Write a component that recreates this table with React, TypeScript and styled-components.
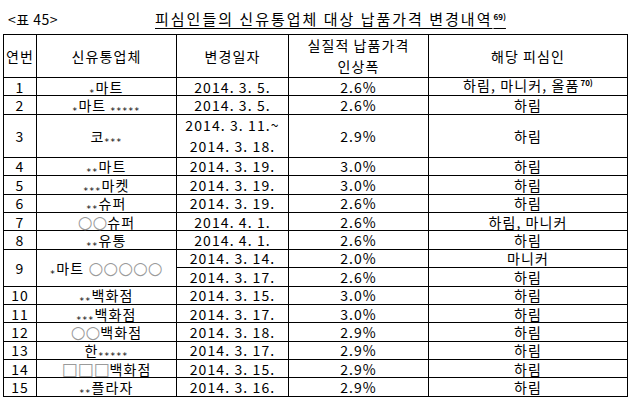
import styled, { createGlobalStyle } from 'styled-components';

const GlobalStyle = createGlobalStyle`
    html, body {
        margin: 0;
        padding: 0;
        background: #ffffff;
    }
    body {
        font-family: "Noto Sans CJK KR", "DejaVu Sans", sans-serif;
        color: #000000;
    }
`;

const Page = styled.div`
    width: 629px;
    height: 400px;
    padding: 3px 2px 0 3px;
    box-sizing: border-box;
    overflow: hidden;
`;

const TitleRow = styled.div`
    display: flex;
    align-items: flex-end;
    height: 26px;
    margin-bottom: 5px;
`;

const TableNo = styled.span`
    width: 147px;
    padding-left: 5px;
    font-size: 14px;
    letter-spacing: 0.5px;
`;

const Caption = styled.span`
    font-size: 15px;
    letter-spacing: 2px;
    text-decoration: underline;
    text-underline-offset: 3px;
`;

const Note = styled.span`
    position: relative;
    top: -5px;
    font-size: 8px;
    font-weight: bold;
    letter-spacing: 0;
    margin-left: 1px;
`;

const Table = styled.table`
    border-collapse: collapse;
    width: 624px;
    table-layout: fixed;
    font-size: 14px;
    letter-spacing: 1.1px;
`;

const Col = styled.col<{ $w: number }>`
    width: ${(p) => p.$w}px;
`;

const HeadCell = styled.th`
    border: 1px solid #000;
    font-weight: normal;
    height: 41px;
    padding: 0;
    line-height: 21px;
    text-align: center;
`;

const Row = styled.tr<{ $h?: number }>`
    height: ${(p) => p.$h ?? 18.4}px;
`;

const Cell = styled.td`
    border: 1px solid #000;
    padding: 0;
    line-height: 14px;
    text-align: center;
    white-space: nowrap;
`;

const TwoLine = styled.div`
    line-height: 21px;
`;

const Gray = styled.span<{ $size?: number }>`
    color: #9a9a9a;
    font-family: "DejaVu Sans", sans-serif;
    font-size: ${(p) => p.$size ?? 17}px;
    line-height: 0;
    letter-spacing: 0;
`;

const Star = styled.span`
    font-family: "DejaVu Sans", sans-serif;
    font-size: 9px;
    line-height: 0;
    letter-spacing: 1.5px;
    vertical-align: -3px;
`;

type Item = {
    no: number;
    name: React.ReactNode;
    date: string;
    rate: string;
    who: React.ReactNode;
};

const stars = (n: number) => <Star>{'*'.repeat(n)}</Star>;

const items: Item[] = [
    { no: 1, name: <>{stars(1)}마트</>, date: '2014. 3. 5.', rate: '2.6%', who: <>하림, 마니커, 올품<Note>70)</Note></> },
    { no: 2, name: <>{stars(1)}마트 {stars(5)}</>, date: '2014. 3. 5.', rate: '2.6%', who: '하림' },
];

const items2: Item[] = [
    { no: 4, name: <>{stars(2)}마트</>, date: '2014. 3. 19.', rate: '3.0%', who: '하림' },
    { no: 5, name: <>{stars(3)}마켓</>, date: '2014. 3. 19.', rate: '3.0%', who: '하림' },
    { no: 6, name: <>{stars(2)}슈퍼</>, date: '2014. 3. 19.', rate: '2.6%', who: '하림' },
    { no: 7, name: <><Gray>○○</Gray>슈퍼</>, date: '2014. 4. 1.', rate: '2.6%', who: '하림, 마니커' },
    { no: 8, name: <>{stars(2)}유통</>, date: '2014. 4. 1.', rate: '2.6%', who: '하림' },
];

const items3: Item[] = [
    { no: 10, name: <>{stars(2)}백화점</>, date: '2014. 3. 15.', rate: '3.0%', who: '하림' },
    { no: 11, name: <>{stars(3)}백화점</>, date: '2014. 3. 17.', rate: '3.0%', who: '하림' },
    { no: 12, name: <><Gray>○○</Gray>백화점</>, date: '2014. 3. 18.', rate: '2.9%', who: '하림' },
    { no: 13, name: <>한{stars(5)}</>, date: '2014. 3. 17.', rate: '2.9%', who: '하림' },
    { no: 14, name: <><Gray>□□□</Gray>백화점</>, date: '2014. 3. 15.', rate: '2.9%', who: '하림' },
    { no: 15, name: <>{stars(2)}플라자</>, date: '2014. 3. 16.', rate: '2.9%', who: '하림' },
];

const renderRow = (it: Item) => (
    <Row key={it.no}>
        <Cell>{it.no}</Cell>
        <Cell>{it.name}</Cell>
        <Cell>{it.date}</Cell>
        <Cell>{it.rate}</Cell>
        <Cell>{it.who}</Cell>
    </Row>
);

const App = () => {
    return (
        <Page>
            <GlobalStyle />
            <TitleRow>
                <TableNo>&lt;표 45&gt;</TableNo>
                <Caption>
                    피심인들의 신유통업체 대상 납품가격 변경내역<Note>69)</Note>
                </Caption>
            </TitleRow>
            <Table>
                <colgroup>
                    <Col $w={33} />
                    <Col $w={140} />
                    <Col $w={112} />
                    <Col $w={140} />
                    <Col $w={199} />
                </colgroup>
                <thead>
                    <tr>
                        <HeadCell>연번</HeadCell>
                        <HeadCell>신유통업체</HeadCell>
                        <HeadCell>변경일자</HeadCell>
                        <HeadCell>
                            실질적 납품가격
                            <br />
                            인상폭
                        </HeadCell>
                        <HeadCell>해당 피심인</HeadCell>
                    </tr>
                </thead>
                <tbody>
                    {items.map(renderRow)}
                    <Row $h={43}>
                        <Cell>3</Cell>
                        <Cell>코{stars(3)}</Cell>
                        <Cell>
                            <TwoLine>
                                2014. 3. 11.~
                                <br />
                                2014. 3. 18.
                            </TwoLine>
                        </Cell>
                        <Cell>2.9%</Cell>
                        <Cell>하림</Cell>
                    </Row>
                    {items2.map(renderRow)}
                    <Row>
                        <Cell rowSpan={2}>9</Cell>
                        <Cell rowSpan={2}>{stars(1)}마트 <Gray>○○○○○</Gray></Cell>
                        <Cell>2014. 3. 14.</Cell>
                        <Cell>2.0%</Cell>
                        <Cell>마니커</Cell>
                    </Row>
                    <Row>
                        <Cell>2014. 3. 17.</Cell>
                        <Cell>2.6%</Cell>
                        <Cell>하림</Cell>
                    </Row>
                    {items3.map(renderRow)}
                </tbody>
            </Table>
        </Page>
    );
};

export default App;
